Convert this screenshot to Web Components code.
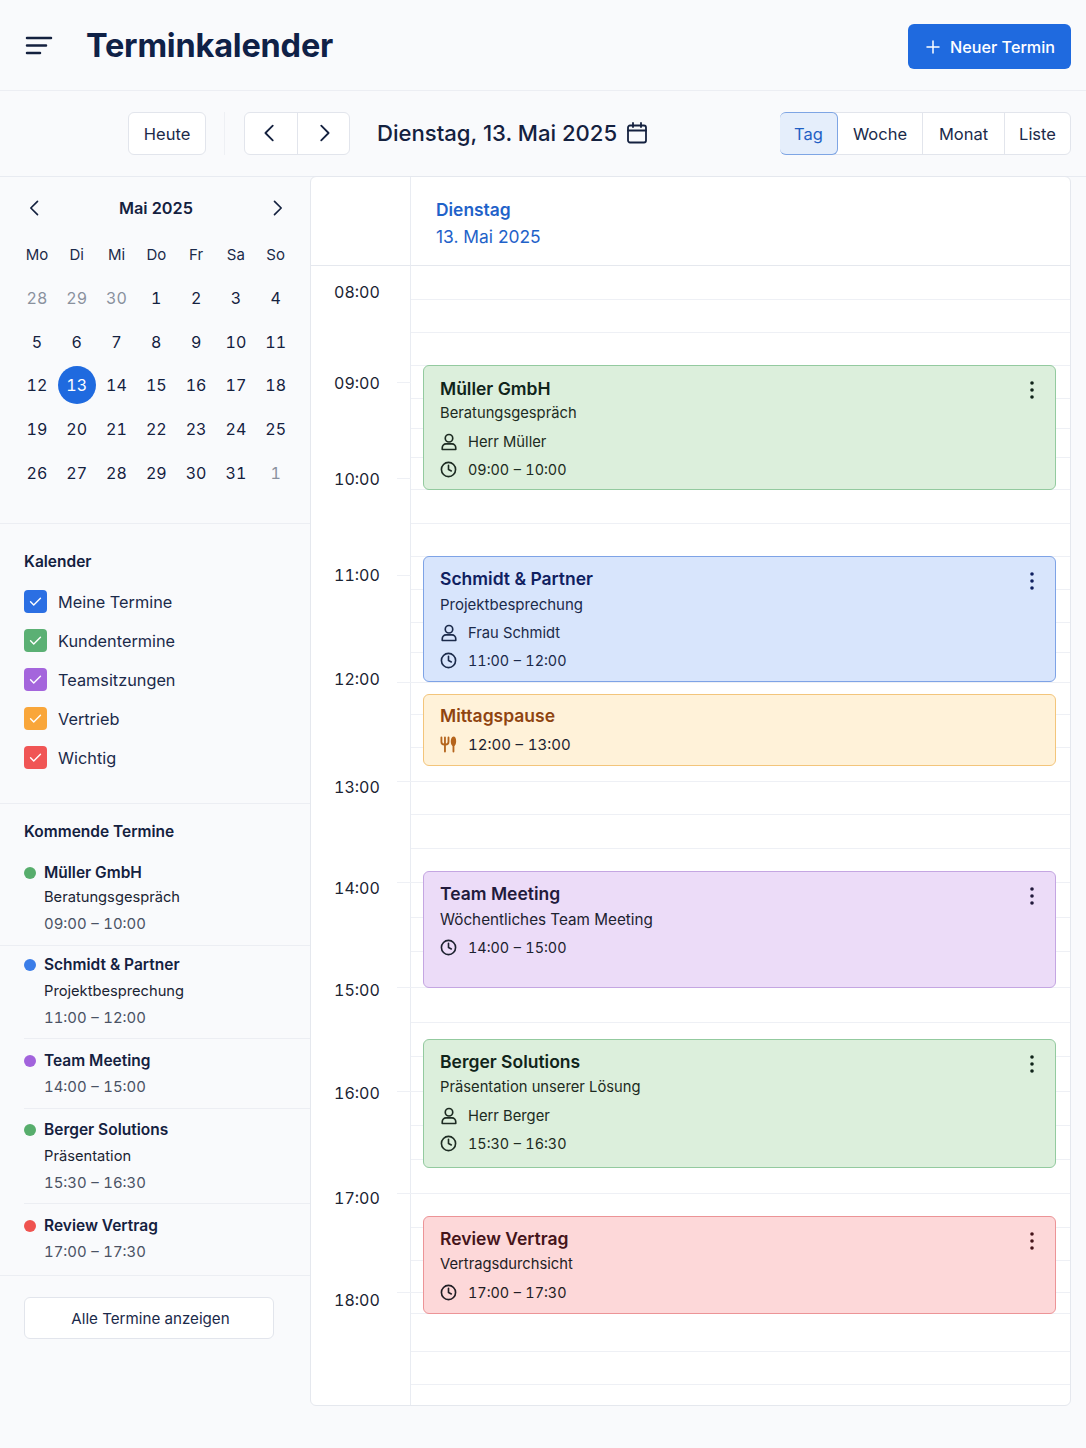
<!DOCTYPE html>
<html lang="de">
<head>
<meta charset="utf-8">
<title>Terminkalender</title>
<style>
  html, body { margin: 0; background: #f9fafc; }
  body { font-family: Inter, "Liberation Sans", sans-serif; color: #14213f; width: 1086px; height: 1448px; overflow: hidden; }
  .layout { display: grid; grid-template-columns: 310px 761px; }
</style>
</head>
<body>
<app-header></app-header>
<cal-toolbar></cal-toolbar>
<div class="layout">
  <cal-sidebar>
    <mini-calendar></mini-calendar>
    <calendar-filter></calendar-filter>
    <upcoming-list>
      <upcoming-item color="#57ad6c" name="Müller GmbH" sub="Beratungsgespräch" time="09:00 – 10:00" style="--pt:17.5px;--pb:7.5px"></upcoming-item>
      <upcoming-item inset color="#3b7de8" name="Schmidt &amp; Partner" sub="Projektbesprechung" time="11:00 – 12:00" style="--pt:6px;--pb:6px;--ng:2px"></upcoming-item>
      <upcoming-item inset color="#a263dc" name="Team Meeting" time="14:00 – 15:00" style="--pt:8.5px;--pb:7.5px;--ng:1px"></upcoming-item>
      <upcoming-item inset color="#57ad6c" name="Berger Solutions" sub="Präsentation" time="15:30 – 16:30" style="--pt:7.5px;--pb:6.5px;--ng:2px"></upcoming-item>
      <upcoming-item color="#ef5350" name="Review Vertrag" time="17:00 – 17:30" style="--pt:8.5px;--pb:9.5px;--ng:1px"></upcoming-item>
    </upcoming-list>
  </cal-sidebar>
  <day-view>
    <day-event kind="green" menu title-text="Müller GmbH" sub="Beratungsgespräch" person="Herr Müller" time="09:00 – 10:00" style="--top:99px;--height:125px;--pad:10px;--title:25px"></day-event>
    <day-event kind="blue" menu title-text="Schmidt &amp; Partner" sub="Projektbesprechung" person="Frau Schmidt" time="11:00 – 12:00" style="--top:290px;--height:126px;--sub:15px"></day-event>
    <day-event kind="orange" title-text="Mittagspause" time="12:00 – 13:00" style="--top:428px;--height:72px;--pad:8px"></day-event>
    <day-event kind="purple" menu title-text="Team Meeting" sub="Wöchentliches Team Meeting" time="14:00 – 15:00" style="--top:605px;--height:117px;--sub:15.250px"></day-event>
    <day-event kind="green" menu title-text="Berger Solutions" sub="Präsentation unserer Lösung" person="Herr Berger" time="15:30 – 16:30" style="--top:773px;--height:129px"></day-event>
    <day-event kind="red" menu title-text="Review Vertrag" sub="Vertragsdurchsicht" time="17:00 – 17:30" style="--top:950px;--height:98px"></day-event>
  </day-view>
</div>

<script>
const icon = (size, body, width = 2) => `<svg width="${size}" height="${size}" viewBox="0 0 24 24" fill="none" stroke="currentColor" stroke-width="${width}" stroke-linecap="round" stroke-linejoin="round">${body}</svg>`;
const ICONS = {
    left: '<path d="M15 4l-8 8 8 8"/>',
    right: '<path d="M9 4l8 8-8 8"/>',
    plus: '<path d="M12 4v16M4 12h16"/>',
    calendar: '<rect x="3" y="4.5" width="18" height="17" rx="2"/><path d="M8 2v4M16 2v4M3 9.500h18"/>',
    person: '<circle cx="12" cy="7" r="5"/><path d="M3 22v-2.500a5 5 0 0 1 5-5h8a5 5 0 0 1 5 5V22z"/>',
    clock: '<circle cx="12" cy="12" r="10"/><path d="M12 6v6l4 2"/>',
    fork: '<path d="M2 2v6a4 4 0 0 0 4 4h2a4 4 0 0 0 4-4V2M7 2v20M19 13v9"/><ellipse cx="19" cy="7.500" rx="2.500" ry="5.500" fill="currentColor"/>',
    check: '<path d="M5 12.500l4.500 4.500L19 7.500"/>'
};

class AppHeader extends HTMLElement {
    constructor() {
        super();
        this.attachShadow({ mode: 'open' }).innerHTML = `
      <style>
        :host { display: flex; align-items: center; box-sizing: border-box; height: 91px; padding: 2px 15px 0 25px; border-bottom: 1px solid #eceef3; }
        svg.menu { display: block; margin: -2px 34px 0 0; }
        h1 { flex: 1; margin: 0 0 0 -1px; font-size: 32.500px; line-height: 40px; font-weight: 700; color: #0f2147; letter-spacing: -.2px; }
        button { display: flex; align-items: center; gap: 8px; height: 45px; width: 163px; box-sizing: border-box; padding: 2px 0 0 16px; border: 0; border-radius: 6px; background: #1f6adf; color: #fff; font: 500 16.200px Inter, sans-serif; }
      </style>
      <svg class="menu" width="28" height="20" viewBox="0 0 28 20" fill="none" stroke="#14213f" stroke-width="2.500" stroke-linecap="round"><path d="M2 3h24M2 10.500h19M2 18h13"/></svg>
      <h1>Terminkalender</h1>
      <button>${icon(18, ICONS.plus, 2)}Neuer Termin</button>`;
    }
}

class CalToolbar extends HTMLElement {
    constructor() {
        super();
        this.attachShadow({ mode: 'open' }).innerHTML = `
      <style>
        :host { display: flex; align-items: center; box-sizing: border-box; height: 86px; padding: 0 15px 1px 128px; border-bottom: 1px solid #e8ebf1; }
        .btn, .group { box-sizing: border-box; height: 43px; border: 1px solid #e2e5ec; border-radius: 6px; background: #fff; font-size: 16.500px; color: #1b2a4a; }
        .btn { display: flex; align-items: center; justify-content: center; width: 78px; padding-top: 1px; }
        .sep { width: 1px; height: 43px; background: #eef0f4; margin: 0 19px 0 18px; }
        .group { display: flex; overflow: hidden; }
        .group > div { display: flex; align-items: center; justify-content: center; border-left: 1px solid #e2e5ec; }
        .group > div:first-child { border-left: 0; }
        .nav { width: 106px; margin-right: 27px; }
        .nav > div { flex: 1; color: #14213f; }
        .nav > div:first-child svg { margin-left: -2px; }
        .nav > div:last-child svg { margin-left: 1px; }
        .title { flex: 1; display: flex; align-items: center; gap: 8px; font-size: 22.100px; font-weight: 500; color: #14213f; }
        .title svg { display: block; }
        .views { width: 291px; overflow: visible; position: relative; }
        .views > div { box-sizing: border-box; height: 100%; padding-top: 1px; }
        .views .on { width: 58px; height: 43px; margin: -1px 0 -1px -1px; border: 1px solid #7ea5e4; border-radius: 6px; background: #e5eefb; color: #1f5fc4; }
        .views .w { width: 84px; border-left: 0; }
        .views .m { width: 82px; }
        .views .l { flex: 1; }
      </style>
      <div class="btn">Heute</div>
      <div class="sep"></div>
      <div class="group nav"><div>${icon(22, ICONS.left)}</div><div>${icon(22, ICONS.right)}</div></div>
      <div class="title">Dienstag, 13. Mai 2025 ${icon(24, ICONS.calendar, 1.800)}</div>
      <div class="group views"><div class="on">Tag</div><div class="w">Woche</div><div class="m">Monat</div><div class="l">Liste</div></div>`;
    }
}

class CalSidebar extends HTMLElement {
    constructor() {
        super();
        this.attachShadow({ mode: 'open' }).innerHTML = `
      <style>:host { display: block; }</style>
      <slot></slot>`;
    }
}

class MiniCalendar extends HTMLElement {
    constructor() {
        super();
        const days = [28, 29, 30, 1, 2, 3, 4, 5, 6, 7, 8, 9, 10, 11, 12, 13, 14, 15, 16, 17, 18, 19, 20, 21, 22, 23, 24, 25, 26, 27, 28, 29, 30, 31, 1];
        const cells = days.map((d, i) => {
            let cls = '';
            if (i < 3 || i === 34) cls = 'muted';
            if (i === 15) cls = 'today';
            return `<div class="${cls}"><span>${d}</span></div>`;
        }).join('');
        const heads = ['Mo', 'Di', 'Mi', 'Do', 'Fr', 'Sa', 'So'].map(d => `<div>${d}</div>`).join('');
        this.attachShadow({ mode: 'open' }).innerHTML = `
      <style>
        :host { display: block; box-sizing: border-box; height: 347px; padding: 19px 17px 0; border-bottom: 1px solid #eceef3; }
        .head { display: flex; align-items: center; justify-content: space-between; height: 24px; padding: 0 6px 0 8px; font-size: 16.300px; font-weight: 600; color: #14213f; }
        .head svg { display: block; }
        .heads, .days { display: grid; grid-template-columns: repeat(7, 39.800px); }
        .heads { margin-top: 25px; height: 20px; line-height: 20px; font-size: 15px; text-align: center; color: #1b2a4a; }
        .days { margin-top: 11px; grid-auto-rows: 43.700px; font-size: 16px; color: #14213f; font-variant-numeric: tabular-nums; }
        .days div { display: flex; align-items: center; justify-content: center; }
        .days span { display: flex; align-items: center; justify-content: center; width: 38px; height: 38px; border-radius: 50%; }
        .muted { color: #8a919e; }
        .today span { background: #1f6adf; color: #fff; }
      </style>
      <div class="head">${icon(20, ICONS.left)}<span>Mai 2025</span>${icon(20, ICONS.right)}</div>
      <div class="heads">${heads}</div>
      <div class="days">${cells}</div>`;
    }
}

class CalendarFilter extends HTMLElement {
    constructor() {
        super();
        const rows = [['#2b6fe3', 'Meine Termine'], ['#5bb074', 'Kundentermine'], ['#a465dc', 'Teamsitzungen'], ['#f9a63a', 'Vertrieb'], ['#f05555', 'Wichtig']]
            .map(([c, t]) => `<div class="row"><span class="box" style="background:${c}">${icon(17, ICONS.check, 2)}</span>${t}</div>`).join('');
        this.attachShadow({ mode: 'open' }).innerHTML = `
      <style>
        :host { display: block; box-sizing: border-box; height: 280px; padding: 28px 24px 0; border-bottom: 1px solid #eceef3; }
        h2 { margin: 0 0 10px; font-size: 15.500px; line-height: 20px; font-weight: 600; color: #14213f; }
        .row { display: flex; align-items: center; gap: 11px; height: 39px; font-size: 16.300px; color: #1b2a4a; }
        .box { display: flex; align-items: center; justify-content: center; box-sizing: border-box; width: 23px; height: 23px; border-radius: 4px; color: #fff; }
      </style>
      <h2>Kalender</h2>
      ${rows}`;
    }
}

class UpcomingList extends HTMLElement {
    constructor() {
        super();
        this.attachShadow({ mode: 'open' }).innerHTML = `
      <style>
        :host { display: block; padding-top: 18px; }
        h2 { margin: 0 0 0 24px; font-size: 15.500px; line-height: 20px; font-weight: 600; color: #14213f; }
        button { display: block; box-sizing: border-box; width: 250px; height: 42px; margin: 21px 0 0 24px; border: 1px solid #e2e5ec; border-radius: 6px; background: #fff; font: 400 15.150px Inter, sans-serif; color: #1b2a4a; padding: 0 0 0 3px; }
      </style>
      <h2>Kommende Termine</h2>
      <slot></slot>
      <button>Alle Termine anzeigen</button>`;
    }
}

class UpcomingItem extends HTMLElement {
    constructor() {
        super();
        const a = n => this.getAttribute(n);
        const sub = a('sub') ? `<div class="sub">${a('sub')}</div>` : '';
        this.attachShadow({ mode: 'open' }).innerHTML = `
      <style>
        :host { display: block; position: relative; padding: var(--pt) 0 var(--pb) 44px; border-bottom: 1px solid #eceef3; }
        :host([inset]) { margin-left: 24px; padding-left: 20px; }
        .dot { display: inline-block; position: absolute; margin: 7px 0 0 -20px; width: 12px; height: 12px; border-radius: 50%; background: ${a('color')}; }
        .name { line-height: 25px; margin-bottom: var(--ng, 0); font-size: 15.500px; font-weight: 600; color: #14213f; }
        .sub { line-height: 25px; margin-bottom: 1px; font-size: 14.700px; color: #1b2433; }
        .time { line-height: 27px; font-size: 14.900px; word-spacing: .6px; color: #4a5264; font-variant-numeric: tabular-nums; }
      </style>
      <span class="dot"></span>
      <div class="name">${a('name').replace('&', '&amp;')}</div>
      ${sub}
      <div class="time">${a('time')}</div>`;
    }
}

class DayView extends HTMLElement {
    constructor() {
        super();
        const lines = [299, 332, 365, 398, 428, 457, 489, 523, 556, 589, 622, 652, 682, 714, 747, 781, 814, 848, 882, 917, 951, 987, 1022, 1056, 1091, 1125, 1159, 1193, 1227, 1260, 1292, 1313, 1351, 1384];
        let prev = 265;
        const rows = lines.map(y => {
            const h = y - prev;
            prev = y;
            return `<div class="line" style="height:${h}px"></div>`;
        }).join('');
        // label, row height, where the hour tick sits below the label top
        const times = [['08:00', 91], ['09:00', 96, 9], ['10:00', 96, 9], ['11:00', 104, 10], ['12:00', 108, 13], ['13:00', 101, 4], ['14:00', 102, 4], ['15:00', 103, 7], ['16:00', 105, 8], ['17:00', 102, 5], ['18:00', 20, 2]];
        const labels = times.map(([t, h, tick]) => `<div class="time" style="height:${h}px">${t}${tick ? `<i style="top:${tick}px"></i>` : ''}</div>`).join('');
        this.attachShadow({ mode: 'open' }).innerHTML = `
      <style>
        :host { display: grid; grid-template-columns: 100px 1fr; grid-template-rows: 89px 1fr; box-sizing: border-box; height: 1230px; margin-top: -1px; background: #fff; border: 1px solid #e5e8ee; border-radius: 6px; }
        .corner { border-right: 1px solid #e9ecf2; border-bottom: 1px solid #e5e8ee; }
        .date { grid-column: 2; padding: 19px 0 0 25px; border-bottom: 1px solid #e5e8ee; color: #1f62c9; font-size: 17.400px; line-height: 27px; }
        .date b { display: block; font-weight: 600; }
        .gutter { padding-top: 16px; border-right: 1px solid #e9ecf2; }
        .time { position: relative; box-sizing: border-box; padding-left: 23px; font-size: 16px; line-height: 20px; color: #1b2433; font-variant-numeric: tabular-nums; }
        .time i { position: absolute; left: 86px; width: 14px; height: 1px; background: #eef0f5; }
        .canvas { position: relative; overflow: hidden; }
        .line { box-sizing: border-box; border-bottom: 1px solid #eef0f5; }
      </style>
      <div class="corner"></div>
      <div class="date"><b>Dienstag</b>13. Mai 2025</div>
      <div class="gutter">${labels}</div>
      <div class="canvas">${rows}<slot></slot></div>`;
    }
}

const EVENT_KINDS = {
    green: ['#dcefdc', '#93ca9f', '#10241a', '#1d2b22'],
    blue: ['#d8e5fc', '#7ea3e6', '#0f2060', '#1b2a4a'],
    orange: ['#fff2d9', '#f3c57b', '#8f4410', '#1d2230'],
    purple: ['#ecdcf8', '#c4a6e2', '#221a3c', '#1d2230'],
    red: ['#fdd8d9', '#ec9497', '#45141a', '#1f1d24']
};

class DayEvent extends HTMLElement {
    constructor() {
        super();
        const a = n => this.getAttribute(n);
        const [bg, border, head, text] = EVENT_KINDS[a('kind')];
        const sub = a('sub') ? `<div class="sub">${a('sub')}</div>` : '';
        const person = a('person') ? `<div class="meta p">${icon(18, ICONS.person, 2.200)}<span>${a('person')}</span></div>` : '';
        const fork = a('kind') === 'orange';
        const time = `<div class="meta t${fork ? ' fork' : ''}">${icon(17, fork ? ICONS.fork : ICONS.clock, fork ? 2.600 : 2.300)}<span>${a('time')}</span></div>`;
        const menu = this.hasAttribute('menu') ? '<svg class="menu" width="6" height="20" viewBox="0 0 6 20"><circle cx="3" cy="3" r="1.800"/><circle cx="3" cy="10" r="1.800"/><circle cx="3" cy="17" r="1.800"/></svg>' : '';
        this.attachShadow({ mode: 'open' }).innerHTML = `
      <style>
        :host { display: block; position: absolute; top: var(--top); left: 12px; width: 633px; height: var(--height); box-sizing: border-box; padding: var(--pad, 9px) 16px 0; background: ${bg}; border: 1px solid ${border}; border-radius: 6px; color: ${text}; }
        .title { font-size: 17.500px; line-height: var(--title, 26px); font-weight: 600; color: ${head}; }
        .sub { font-size: var(--sub, 14.750px); line-height: 25px; }
        .meta { display: flex; align-items: center; gap: 11px; height: 28px; font-size: 14.750px; }
        .meta.p { gap: 10px; margin-top: 2px; }
        .meta.t { font-size: 14.400px; word-spacing: .6px; font-variant-numeric: tabular-nums; }
        .sub + .meta.t { margin-top: 1px; }
        .p + .meta.t { margin-top: -1px; }
        .title + .meta { margin-top: 1px; }
        .meta svg { display: block; flex: none; }
        .fork { color: #b5651d; }
        .meta.fork { font-size: 15px; }
        .fork span { color: ${text}; }
        .menu { position: absolute; top: 14px; right: 20px; fill: ${head}; }
      </style>
      <div class="title">${a('title-text').replace('&', '&amp;')}</div>
      ${sub}${person}${time}${menu}`;
    }
}

window.customElements.define('app-header', AppHeader);
window.customElements.define('cal-toolbar', CalToolbar);
window.customElements.define('cal-sidebar', CalSidebar);
window.customElements.define('mini-calendar', MiniCalendar);
window.customElements.define('calendar-filter', CalendarFilter);
window.customElements.define('upcoming-list', UpcomingList);
window.customElements.define('upcoming-item', UpcomingItem);
window.customElements.define('day-view', DayView);
window.customElements.define('day-event', DayEvent);
</script>
</body>
</html>
